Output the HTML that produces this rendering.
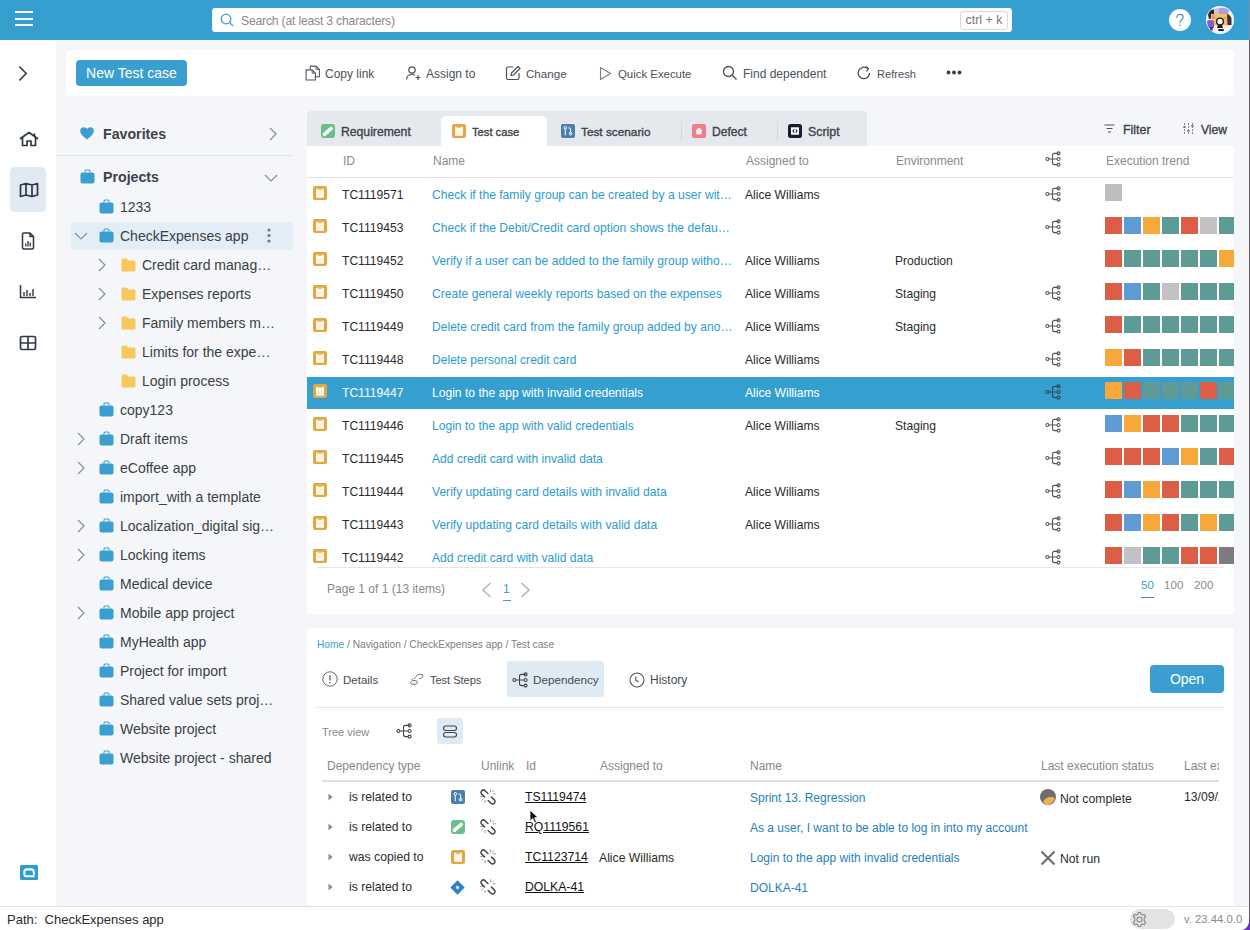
<!DOCTYPE html>
<html><head><meta charset="utf-8">
<style>
*{box-sizing:border-box;margin:0;padding:0}
html,body{width:1250px;height:930px;overflow:hidden}
body{position:relative;background:#f4f6f9;font-family:"Liberation Sans",sans-serif;color:#222;font-size:12px}
.abs{position:absolute}
#hdr{left:0;top:0;width:1250px;height:40px;background:#359fd0}
#rail{left:0;top:40px;width:56px;height:866px;background:#fff}
#tb{left:66px;top:50px;width:1168px;height:46px;background:#fff;border-radius:4px}
#tabs{left:307px;top:111px;width:560px;height:35px;background:#e5e9ed;border-radius:4px 4px 0 0}
#tcard{left:307px;top:146px;width:927px;height:468px;background:#fff;border-radius:0 3px 3px 3px}
#dcard{left:307px;top:628px;width:927px;height:278px;background:#fff;border-radius:3px 3px 0 0}
#status{left:0;top:906px;width:1250px;height:24px;background:#fff;border-top:1px solid #e3e3e3}
#edge{left:1249px;top:0;width:1px;height:930px;background:#6a5a68}
.tbt{top:17px;font-size:12px;color:#4a5058;white-space:nowrap;line-height:14px}
.tabt{top:14px;font-size:12.2px;color:#3d434c;-webkit-text-stroke:0.35px #3d434c;white-space:nowrap;line-height:14px}
.trh{font-size:14.2px;font-weight:bold;color:#3b424b;white-space:nowrap;line-height:16px}
.trt{font-size:14px;color:#3a3f46;white-space:nowrap;line-height:17px;margin-top:1px}
.th{font-size:12px;color:#8a8a8a;white-space:nowrap;line-height:14px;margin-top:1px}
.td{font-size:12.1px;white-space:nowrap;line-height:14px}
.pgs{top:578px;font-size:11.6px;color:#8a8a8a;line-height:14px;white-space:nowrap}
.dtt{top:673px;font-size:12px;color:#444a52;line-height:14px;white-space:nowrap}
.dth{top:759px;font-size:12px;color:#888;line-height:14px;white-space:nowrap}
.dtd{font-size:12.2px;color:#2b2b2b;line-height:14px;white-space:nowrap}
</style></head><body>
<div id="hdr" class="abs">
 <div class="abs" style="left:15px;top:11px;width:18px;height:2px;background:#fff"></div>
 <div class="abs" style="left:15px;top:18px;width:18px;height:2px;background:#fff"></div>
 <div class="abs" style="left:15px;top:24px;width:18px;height:2px;background:#fff"></div>
 <div class="abs" style="left:212px;top:8px;width:800px;height:24px;background:#fff;border-radius:3px">
  <svg class="abs" style="left:8px;top:5px" width="14" height="14" viewBox="0 0 14 14"><circle cx="6" cy="6" r="4.8" fill="none" stroke="#4a9fd0" stroke-width="1.3"/><line x1="9.5" y1="9.5" x2="13" y2="13" stroke="#4a9fd0" stroke-width="1.3"/></svg>
  <div class="abs" style="left:29px;top:6px;font-size:12.2px;color:#8a8a8a;white-space:nowrap;letter-spacing:-0.2px">Search (at least 3 characters)</div>
  <div class="abs" style="left:748px;top:3px;width:48px;height:19px;border:1px solid #dadada;border-radius:3px;font-size:12.5px;color:#777;text-align:center;line-height:17px">ctrl + k</div>
 </div>
 <svg class="abs" style="left:1169px;top:9px" width="22" height="22" viewBox="0 0 22 22"><circle cx="11" cy="11" r="11" fill="#fff"/><path d="M7.9 8.4 Q7.9 5.3 11 5.3 Q14.1 5.3 14.1 8.1 Q14.1 9.9 12.2 10.9 Q11 11.6 11 13.6" fill="none" stroke="#4b8fc2" stroke-width="1.2" stroke-linecap="round"/><circle cx="11" cy="16.3" r="0.8" fill="#4b8fc2"/></svg>
 <svg class="abs" style="left:1206px;top:6px" width="28" height="28" viewBox="0 0 28 28"><defs><clipPath id="avc"><circle cx="14" cy="14" r="13.6"/></clipPath></defs><circle cx="14" cy="14" r="14" fill="#e6f3fa"/><g clip-path="url(#avc)"><rect x="0" y="0" width="28" height="28" fill="#f7f2f7"/><path d="M8 3 Q16 0 22 3 L22 8 L8 8 Z" fill="#cdc3cf"/><path d="M13 2.5 Q19 1 23 4 L22 8 L13 8 Z" fill="#b39be8"/><path d="M2 9 Q3 3 8 3.5 L8 12 L3 13 Z" fill="#2e2a33"/><rect x="5" y="8" width="18" height="11.5" fill="#f3c552"/><path d="M6 9 L9 9 L9 13 L6 13 Z M18 11 L20 11 L20 13 L18 13 Z" fill="#ef8f9a"/><path d="M21 8 Q25 9 25.5 13 L25.5 19 L21.5 19 Z" fill="#3b2f45"/><circle cx="14" cy="15.5" r="3.4" fill="#f4f0ff" stroke="#1f1f24" stroke-width="1.4"/><path d="M12 19 L11 22 L17 22 L16 19 Z" fill="#1f1f24"/><rect x="12" y="23" width="6" height="2" rx="1" fill="#1f1f24"/><path d="M1 15 Q4 13 8 15 L8 22 L2 22 Z" fill="#8a5ccc"/><path d="M4 21 L4 27 L6 27 L7 21 Z" fill="#4a2b7a"/><path d="M0 23 Q14 29 28 21 L28 28 L0 28 Z" fill="#e2f2fb"/></g></svg>
</div>
<div id="rail" class="abs">
 <svg class="abs" style="left:17px;top:25px" width="12" height="17" viewBox="0 0 12 17"><path d="M2.8 2 L9.2 8.5 L2.8 15" fill="none" stroke="#333a44" stroke-width="1.6" stroke-linecap="round"/></svg>
 <svg class="abs" style="left:19px;top:91px" width="20" height="16" viewBox="0 0 20 16"><path d="M1.5 7.5 L10 1.5 L18.5 7.5 M15.5 3 V5.5 M3.5 6.2 V14.5 H8 V10 H12 V14.5 H16.5 V6.2" fill="none" stroke="#2e3744" stroke-width="1.7" stroke-linejoin="round" stroke-linecap="round"/></svg>
 <div class="abs" style="left:10px;top:127px;width:36px;height:45px;background:#dfeaf3;border-radius:5px"></div>
 <svg class="abs" style="left:19px;top:142px" width="20" height="16" viewBox="0 0 20 16"><path d="M1.5 3 L7 1.5 L13 3 L18.5 1.5 V13 L13 14.5 L7 13 L1.5 14.5 Z M7 1.5 V13 M13 3 V14.5" fill="none" stroke="#2e3744" stroke-width="1.7" stroke-linejoin="round"/></svg>
 <svg class="abs" style="left:21px;top:192px" width="14" height="18" viewBox="0 0 14 18"><path d="M1.5 2.5 Q1.5 1 3 1 H9 L12.5 4.5 V15.5 Q12.5 17 11 17 H3 Q1.5 17 1.5 15.5 Z M9 1 V4.5 H12.5" fill="none" stroke="#2e3744" stroke-width="1.5" stroke-linejoin="round"/><path d="M4.8 14.5 V11.5 M7 14.5 V9 M9.2 14.5 V10.5" stroke="#2e3744" stroke-width="1.3"/></svg>
 <svg class="abs" style="left:19px;top:244px" width="18" height="15" viewBox="0 0 18 15"><path d="M1.5 1 V13.5 H17" fill="none" stroke="#2e3744" stroke-width="1.5"/><path d="M5 12 V8 M8 12 V6 M11 12 V9 M14 12 V5" stroke="#2e3744" stroke-width="1.4"/></svg>
 <svg class="abs" style="left:19px;top:295px" width="18" height="16" viewBox="0 0 18 16"><rect x="1.5" y="1.5" width="15" height="13" rx="1.5" fill="none" stroke="#2e3744" stroke-width="1.7"/><path d="M1.5 8 H16.5 M9 1.5 V14.5" stroke="#2e3744" stroke-width="1.7"/></svg>
 <svg class="abs" style="left:20px;top:825px" width="18" height="15" viewBox="0 0 18 15"><rect width="18" height="15" rx="1.5" fill="#2f9bd0"/><path d="M14.6 11.2 H6.3 Q4.4 11.2 4.4 9.2 V6.6 Q4.4 4.4 6.7 4.4 H11.4 Q13.3 4.4 13.6 6.3 L14.1 9.6" fill="none" stroke="#fff" stroke-width="2.1" stroke-linejoin="round"/></svg>
</div>
<div id="tb" class="abs">
 <div class="abs" style="left:10px;top:10px;width:111px;height:26px;background:#3a9fd0;border-radius:4px;color:#fff;font-size:14px;line-height:26px;text-align:center">New Test case</div>
 <svg class="abs" style="left:239px;top:15px" width="16" height="16" viewBox="0 0 16 16"><path d="M5.3 4.3 V1.1 H11.2 L14.4 4.3 V11.8 H10.6" fill="none" stroke="#50565e" stroke-width="1.1" stroke-linejoin="round"/><path d="M11.2 1.1 V4.3 H14.4" fill="none" stroke="#50565e" stroke-width="1"/><path d="M1.1 4.9 H7.2 L10.4 8.1 V15 H1.1 Z" fill="none" stroke="#50565e" stroke-width="1.1" stroke-linejoin="round"/><path d="M7.2 4.9 V8.1 H10.4" fill="none" stroke="#50565e" stroke-width="1"/></svg>
 <div class="abs tbt" style="left:259px">Copy link</div>
 <svg class="abs" style="left:339px;top:15px" width="17" height="16" viewBox="0 0 17 16"><circle cx="7" cy="5" r="3.2" fill="none" stroke="#4a4f57" stroke-width="1.2"/><path d="M1.5 14.5 Q2 9.5 7 9.5 Q9 9.5 10 10.3" fill="none" stroke="#4a4f57" stroke-width="1.2"/><path d="M13 10 V15 M10.5 12.5 H15.5" stroke="#4a4f57" stroke-width="1.2"/></svg>
 <div class="abs tbt" style="left:360px">Assign to</div>
 <svg class="abs" style="left:439px;top:15px" width="16" height="16" viewBox="0 0 16 16"><path d="M8 2 H3 Q1.5 2 1.5 3.5 V13 Q1.5 14.5 3 14.5 H12.5 Q14 14.5 14 13 V8" fill="none" stroke="#4a4f57" stroke-width="1.2"/><path d="M6 10.5 L6.5 8 L13 1.5 L15 3.5 L8.5 10 Z" fill="none" stroke="#4a4f57" stroke-width="1.2" stroke-linejoin="round"/></svg>
 <div class="abs tbt" style="left:460px;font-size:11.6px">Change</div>
 <svg class="abs" style="left:533px;top:16px" width="13" height="15" viewBox="0 0 13 15"><path d="M1.5 1.5 L11.5 7.5 L1.5 13.5 Z" fill="none" stroke="#7a7f86" stroke-width="1.1" stroke-linejoin="round"/></svg>
 <div class="abs tbt" style="left:552px;font-size:11.4px">Quick Execute</div>
 <svg class="abs" style="left:656px;top:15px" width="16" height="16" viewBox="0 0 16 16"><circle cx="6.5" cy="6.5" r="5" fill="none" stroke="#4a4f57" stroke-width="1.3"/><path d="M10.2 10.2 L14.5 14.5" stroke="#4a4f57" stroke-width="1.4"/></svg>
 <div class="abs tbt" style="left:677px">Find dependent</div>
 <svg class="abs" style="left:790px;top:15px" width="16" height="16" viewBox="0 0 16 16"><path d="M13.5 8 A5.7 5.7 0 1 1 11.5 3.6" fill="none" stroke="#4a4f57" stroke-width="1.3"/><path d="M9.5 1.5 L12.5 3.5 L10.5 6.5" fill="none" stroke="#4a4f57" stroke-width="1.3" stroke-linejoin="round"/></svg>
 <div class="abs tbt" style="left:811px;font-size:11.1px">Refresh</div>
 <svg class="abs" style="left:880px;top:20px" width="16" height="5" viewBox="0 0 16 5"><circle cx="2.5" cy="2.5" r="1.9" fill="#3a3f47"/><circle cx="8" cy="2.5" r="1.9" fill="#3a3f47"/><circle cx="13.5" cy="2.5" r="1.9" fill="#3a3f47"/></svg>
</div>
<div id="tree">
<svg class="abs" style="left:80px;top:127px" width="14" height="13" viewBox="0 0 14 13"><path d="M7 12.5 C3 9.5 0.2 7 0.2 3.8 C0.2 1.8 1.8 0.3 3.7 0.3 C5 0.3 6.2 1 7 2 C7.8 1 9 0.3 10.3 0.3 C12.2 0.3 13.8 1.8 13.8 3.8 C13.8 7 11 9.5 7 12.5 Z" fill="#3a9fd0"/></svg>
<div class="abs trh" style="left:103px;top:126px">Favorites</div>
<svg class="abs" style="left:269px;top:127px" width="8" height="14" viewBox="0 0 8 14"><path d="M1 1 L7 7 L1 13" fill="none" stroke="#8a8f96" stroke-width="1.2"/></svg>
<div class="abs" style="left:56px;top:155px;width:236px;height:1px;background:#e1e4e8"></div>
<svg class="abs" style="left:80px;top:169px" width="15" height="15" viewBox="0 0 15 15"><path d="M5 3.5 V2 Q5 1 6 1 H9 Q10 1 10 2 V3.5" fill="none" stroke="#3a9fd0" stroke-width="1.1"/><rect x="0.5" y="3.5" width="14" height="11" rx="2" fill="#3a9fd0"/></svg>
<div class="abs trh" style="left:103px;top:169px">Projects</div>
<svg class="abs" style="left:264px;top:174px" width="14" height="8" viewBox="0 0 14 8"><path d="M1 1 L7 7 L13 1" fill="none" stroke="#8a8f96" stroke-width="1.2"/></svg>
<div class="abs" style="left:71px;top:222px;width:222px;height:28px;background:#e2edf5;border-radius:3px"></div>
<svg class="abs" style="left:267px;top:228px" width="4" height="15" viewBox="0 0 4 15"><circle cx="2" cy="2" r="1.6" fill="#777"/><circle cx="2" cy="7.5" r="1.6" fill="#777"/><circle cx="2" cy="13" r="1.6" fill="#777"/></svg>
<svg class="abs" style="left:99px;top:199px" width="15" height="15" viewBox="0 0 15 15"><path d="M5 3.5 V2 Q5 1 6 1 H9 Q10 1 10 2 V3.5" fill="none" stroke="#3a9fd0" stroke-width="1.1"/><rect x="0.5" y="3.5" width="14" height="11" rx="2" fill="#3a9fd0"/></svg>
<div class="abs trt" style="left:120px;top:198px">1233</div>
<svg class="abs" style="left:74px;top:232px" width="14" height="8" viewBox="0 0 14 8"><path d="M1 1 L7 7 L13 1" fill="none" stroke="#8a8f96" stroke-width="1.2"/></svg>
<svg class="abs" style="left:99px;top:228px" width="15" height="15" viewBox="0 0 15 15"><path d="M5 3.5 V2 Q5 1 6 1 H9 Q10 1 10 2 V3.5" fill="none" stroke="#3a9fd0" stroke-width="1.1"/><rect x="0.5" y="3.5" width="14" height="11" rx="2" fill="#3a9fd0"/></svg>
<div class="abs trt" style="left:120px;top:227px">CheckExpenses app</div>
<svg class="abs" style="left:98px;top:258px" width="8" height="14" viewBox="0 0 8 14"><path d="M1 1 L7 7 L1 13" fill="none" stroke="#8a8f96" stroke-width="1.2"/></svg>
<svg class="abs" style="left:121px;top:258px" width="15" height="14" viewBox="0 0 15 14"><path d="M0.5 2 Q0.5 0.5 2 0.5 H5.5 L7.5 2.5 H13 Q14.5 2.5 14.5 4 V12 Q14.5 13.5 13 13.5 H2 Q0.5 13.5 0.5 12 Z" fill="#f7c85c"/></svg>
<div class="abs trt" style="left:142px;top:256px">Credit card manag…</div>
<svg class="abs" style="left:98px;top:287px" width="8" height="14" viewBox="0 0 8 14"><path d="M1 1 L7 7 L1 13" fill="none" stroke="#8a8f96" stroke-width="1.2"/></svg>
<svg class="abs" style="left:121px;top:287px" width="15" height="14" viewBox="0 0 15 14"><path d="M0.5 2 Q0.5 0.5 2 0.5 H5.5 L7.5 2.5 H13 Q14.5 2.5 14.5 4 V12 Q14.5 13.5 13 13.5 H2 Q0.5 13.5 0.5 12 Z" fill="#f7c85c"/></svg>
<div class="abs trt" style="left:142px;top:285px">Expenses reports</div>
<svg class="abs" style="left:98px;top:316px" width="8" height="14" viewBox="0 0 8 14"><path d="M1 1 L7 7 L1 13" fill="none" stroke="#8a8f96" stroke-width="1.2"/></svg>
<svg class="abs" style="left:121px;top:316px" width="15" height="14" viewBox="0 0 15 14"><path d="M0.5 2 Q0.5 0.5 2 0.5 H5.5 L7.5 2.5 H13 Q14.5 2.5 14.5 4 V12 Q14.5 13.5 13 13.5 H2 Q0.5 13.5 0.5 12 Z" fill="#f7c85c"/></svg>
<div class="abs trt" style="left:142px;top:314px">Family members m…</div>
<svg class="abs" style="left:121px;top:345px" width="15" height="14" viewBox="0 0 15 14"><path d="M0.5 2 Q0.5 0.5 2 0.5 H5.5 L7.5 2.5 H13 Q14.5 2.5 14.5 4 V12 Q14.5 13.5 13 13.5 H2 Q0.5 13.5 0.5 12 Z" fill="#f7c85c"/></svg>
<div class="abs trt" style="left:142px;top:343px">Limits for the expe…</div>
<svg class="abs" style="left:121px;top:374px" width="15" height="14" viewBox="0 0 15 14"><path d="M0.5 2 Q0.5 0.5 2 0.5 H5.5 L7.5 2.5 H13 Q14.5 2.5 14.5 4 V12 Q14.5 13.5 13 13.5 H2 Q0.5 13.5 0.5 12 Z" fill="#f7c85c"/></svg>
<div class="abs trt" style="left:142px;top:372px">Login process</div>
<svg class="abs" style="left:99px;top:402px" width="15" height="15" viewBox="0 0 15 15"><path d="M5 3.5 V2 Q5 1 6 1 H9 Q10 1 10 2 V3.5" fill="none" stroke="#3a9fd0" stroke-width="1.1"/><rect x="0.5" y="3.5" width="14" height="11" rx="2" fill="#3a9fd0"/></svg>
<div class="abs trt" style="left:120px;top:401px">copy123</div>
<svg class="abs" style="left:77px;top:432px" width="8" height="14" viewBox="0 0 8 14"><path d="M1 1 L7 7 L1 13" fill="none" stroke="#8a8f96" stroke-width="1.2"/></svg>
<svg class="abs" style="left:99px;top:431px" width="15" height="15" viewBox="0 0 15 15"><path d="M5 3.5 V2 Q5 1 6 1 H9 Q10 1 10 2 V3.5" fill="none" stroke="#3a9fd0" stroke-width="1.1"/><rect x="0.5" y="3.5" width="14" height="11" rx="2" fill="#3a9fd0"/></svg>
<div class="abs trt" style="left:120px;top:430px">Draft items</div>
<svg class="abs" style="left:77px;top:461px" width="8" height="14" viewBox="0 0 8 14"><path d="M1 1 L7 7 L1 13" fill="none" stroke="#8a8f96" stroke-width="1.2"/></svg>
<svg class="abs" style="left:99px;top:460px" width="15" height="15" viewBox="0 0 15 15"><path d="M5 3.5 V2 Q5 1 6 1 H9 Q10 1 10 2 V3.5" fill="none" stroke="#3a9fd0" stroke-width="1.1"/><rect x="0.5" y="3.5" width="14" height="11" rx="2" fill="#3a9fd0"/></svg>
<div class="abs trt" style="left:120px;top:459px">eCoffee app</div>
<svg class="abs" style="left:99px;top:489px" width="15" height="15" viewBox="0 0 15 15"><path d="M5 3.5 V2 Q5 1 6 1 H9 Q10 1 10 2 V3.5" fill="none" stroke="#3a9fd0" stroke-width="1.1"/><rect x="0.5" y="3.5" width="14" height="11" rx="2" fill="#3a9fd0"/></svg>
<div class="abs trt" style="left:120px;top:488px">import_with a template</div>
<svg class="abs" style="left:77px;top:519px" width="8" height="14" viewBox="0 0 8 14"><path d="M1 1 L7 7 L1 13" fill="none" stroke="#8a8f96" stroke-width="1.2"/></svg>
<svg class="abs" style="left:99px;top:518px" width="15" height="15" viewBox="0 0 15 15"><path d="M5 3.5 V2 Q5 1 6 1 H9 Q10 1 10 2 V3.5" fill="none" stroke="#3a9fd0" stroke-width="1.1"/><rect x="0.5" y="3.5" width="14" height="11" rx="2" fill="#3a9fd0"/></svg>
<div class="abs trt" style="left:120px;top:517px">Localization_digital sig…</div>
<svg class="abs" style="left:77px;top:548px" width="8" height="14" viewBox="0 0 8 14"><path d="M1 1 L7 7 L1 13" fill="none" stroke="#8a8f96" stroke-width="1.2"/></svg>
<svg class="abs" style="left:99px;top:547px" width="15" height="15" viewBox="0 0 15 15"><path d="M5 3.5 V2 Q5 1 6 1 H9 Q10 1 10 2 V3.5" fill="none" stroke="#3a9fd0" stroke-width="1.1"/><rect x="0.5" y="3.5" width="14" height="11" rx="2" fill="#3a9fd0"/></svg>
<div class="abs trt" style="left:120px;top:546px">Locking items</div>
<svg class="abs" style="left:99px;top:576px" width="15" height="15" viewBox="0 0 15 15"><path d="M5 3.5 V2 Q5 1 6 1 H9 Q10 1 10 2 V3.5" fill="none" stroke="#3a9fd0" stroke-width="1.1"/><rect x="0.5" y="3.5" width="14" height="11" rx="2" fill="#3a9fd0"/></svg>
<div class="abs trt" style="left:120px;top:575px">Medical device</div>
<svg class="abs" style="left:77px;top:606px" width="8" height="14" viewBox="0 0 8 14"><path d="M1 1 L7 7 L1 13" fill="none" stroke="#8a8f96" stroke-width="1.2"/></svg>
<svg class="abs" style="left:99px;top:605px" width="15" height="15" viewBox="0 0 15 15"><path d="M5 3.5 V2 Q5 1 6 1 H9 Q10 1 10 2 V3.5" fill="none" stroke="#3a9fd0" stroke-width="1.1"/><rect x="0.5" y="3.5" width="14" height="11" rx="2" fill="#3a9fd0"/></svg>
<div class="abs trt" style="left:120px;top:604px">Mobile app project</div>
<svg class="abs" style="left:99px;top:634px" width="15" height="15" viewBox="0 0 15 15"><path d="M5 3.5 V2 Q5 1 6 1 H9 Q10 1 10 2 V3.5" fill="none" stroke="#3a9fd0" stroke-width="1.1"/><rect x="0.5" y="3.5" width="14" height="11" rx="2" fill="#3a9fd0"/></svg>
<div class="abs trt" style="left:120px;top:633px">MyHealth app</div>
<svg class="abs" style="left:99px;top:663px" width="15" height="15" viewBox="0 0 15 15"><path d="M5 3.5 V2 Q5 1 6 1 H9 Q10 1 10 2 V3.5" fill="none" stroke="#3a9fd0" stroke-width="1.1"/><rect x="0.5" y="3.5" width="14" height="11" rx="2" fill="#3a9fd0"/></svg>
<div class="abs trt" style="left:120px;top:662px">Project for import</div>
<svg class="abs" style="left:99px;top:692px" width="15" height="15" viewBox="0 0 15 15"><path d="M5 3.5 V2 Q5 1 6 1 H9 Q10 1 10 2 V3.5" fill="none" stroke="#3a9fd0" stroke-width="1.1"/><rect x="0.5" y="3.5" width="14" height="11" rx="2" fill="#3a9fd0"/></svg>
<div class="abs trt" style="left:120px;top:691px">Shared value sets proj…</div>
<svg class="abs" style="left:99px;top:721px" width="15" height="15" viewBox="0 0 15 15"><path d="M5 3.5 V2 Q5 1 6 1 H9 Q10 1 10 2 V3.5" fill="none" stroke="#3a9fd0" stroke-width="1.1"/><rect x="0.5" y="3.5" width="14" height="11" rx="2" fill="#3a9fd0"/></svg>
<div class="abs trt" style="left:120px;top:720px">Website project</div>
<svg class="abs" style="left:99px;top:750px" width="15" height="15" viewBox="0 0 15 15"><path d="M5 3.5 V2 Q5 1 6 1 H9 Q10 1 10 2 V3.5" fill="none" stroke="#3a9fd0" stroke-width="1.1"/><rect x="0.5" y="3.5" width="14" height="11" rx="2" fill="#3a9fd0"/></svg>
<div class="abs trt" style="left:120px;top:749px">Website project - shared</div>
</div>
<div id="tabs" class="abs">
 <div class="abs" style="left:134px;top:5px;width:106px;height:31px;background:#fff;border-radius:5px 5px 0 0"></div>
 <div class="abs" style="left:374px;top:10px;width:1px;height:20px;background:#d5dade"></div>
 <div class="abs" style="left:470px;top:10px;width:1px;height:20px;background:#d5dade"></div>
 <svg class="abs" style="left:14px;top:13px" width="14" height="14" viewBox="0 0 14 14"><rect width="14" height="14" rx="3" fill="#6bbd8c"/><path d="M3.4 10.4 L10.2 4.4" stroke="#fbfffc" stroke-width="3.6" stroke-linecap="round"/><path d="M7.4 5.8 L8.9 7.3" stroke="#9bd3b0" stroke-width="0.6"/></svg>
 <div class="abs tabt" style="left:34px">Requirement</div>
 <svg class="abs" style="left:145px;top:13px" width="14" height="14" viewBox="0 0 14 14"><rect width="14" height="14" rx="2" fill="#e0a743"/><rect x="3" y="2.8" width="8" height="9" fill="#fdf7e6"/><path d="M5 3.5 H9" stroke="#f0c070" stroke-width="1"/></svg>
 <div class="abs tabt" style="left:165px;font-size:11.2px">Test case</div>
 <svg class="abs" style="left:254px;top:13px" width="14" height="14" viewBox="0 0 14 14"><rect width="14" height="14" rx="2" fill="#4a7fae"/><circle cx="4.3" cy="3.8" r="1.3" fill="none" stroke="#fff" stroke-width="1"/><path d="M4.3 5.1 V11.3 M7.3 4 H8.6 Q9.6 4 9.6 5 V8.3" fill="none" stroke="#fff" stroke-width="1"/><circle cx="9.6" cy="9.6" r="1.4" fill="none" stroke="#fff" stroke-width="1"/><circle cx="9.6" cy="9.6" r="0.5" fill="#fff"/></svg>
 <div class="abs tabt" style="left:274px;font-size:11.8px">Test scenario</div>
 <svg class="abs" style="left:385px;top:13px" width="14" height="14" viewBox="0 0 14 14"><rect width="14" height="14" rx="2" fill="#ec7f8a"/><ellipse cx="7" cy="7.8" rx="2.6" ry="3" fill="#fff"/><path d="M4 6 L5 6.8 M10 6 L9 6.8 M4 9.8 L5 9.3 M10 9.8 L9 9.3 M5.8 4 L6.4 5 M8.2 4 L7.6 5" stroke="#fff" stroke-width="0.9"/><path d="M7 5.5 V10.5" stroke="#ec7f8a" stroke-width="0.5"/></svg>
 <div class="abs tabt" style="left:405px;font-size:12.1px">Defect</div>
 <svg class="abs" style="left:481px;top:13px" width="14" height="14" viewBox="0 0 14 14"><rect width="14" height="14" rx="2.5" fill="#17202c"/><rect x="3" y="3.3" width="8" height="7.4" fill="#fff"/><path d="M6.2 5.3 L4.9 7 L6.2 8.7 M7.8 5.3 L9.1 7 L7.8 8.7" fill="none" stroke="#17202c" stroke-width="1.1"/></svg>
 <div class="abs tabt" style="left:501px;font-size:12.4px">Script</div>
</div>
<svg class="abs" style="left:1104px;top:124px" width="11" height="9" viewBox="0 0 11 9"><path d="M0.5 1 H10.5 M2.5 4.5 H8.5 M4 8 H7" stroke="#555" stroke-width="1.1"/></svg>
<div class="abs tabt" style="left:1123px;top:123px;font-size:12.4px">Filter</div>
<svg class="abs" style="left:1183px;top:123px" width="11" height="12" viewBox="0 0 11 12"><path d="M1.5 0 V12 M5.5 0 V12 M9.5 0 V12" stroke="#888" stroke-width="1" stroke-dasharray="2 1"/><path d="M0 4 H3 M4 8 H7 M8 3 H11" stroke="#555" stroke-width="1.2"/></svg>
<div class="abs tabt" style="left:1201px;top:123px;font-size:12.1px">View</div>
<div id="tcard" class="abs"></div>
<div id="table">
<div class="abs th" style="left:343px;top:153px">ID</div>
<div class="abs th" style="left:433px;top:153px">Name</div>
<div class="abs th" style="left:746px;top:153px">Assigned to</div>
<div class="abs th" style="left:896px;top:153px">Environment</div>
<svg class="abs" style="left:1045px;top:151px" width="16" height="16" viewBox="0 0 16 16"><circle cx="2.4" cy="8" r="1.5" fill="none" stroke="#555" stroke-width="1.1"/><path d="M3.9 8 H12.1 M13.7 2.4 H9.5 Q7.5 2.4 7.5 4.4 V11.6 Q7.5 13.6 9.5 13.6 H12.1" fill="none" stroke="#555" stroke-width="1.1"/><circle cx="13.6" cy="2.4" r="1.5" fill="none" stroke="#555" stroke-width="1.1"/><circle cx="13.6" cy="8" r="1.5" fill="none" stroke="#555" stroke-width="1.1"/><circle cx="13.6" cy="13.6" r="1.5" fill="none" stroke="#555" stroke-width="1.1"/></svg>
<div class="abs th" style="left:1106px;top:153px">Execution trend</div>
<div class="abs" style="left:307px;top:177px;width:927px;height:1px;background:#e2e2e2"></div>
<svg class="abs" style="left:313px;top:186px" width="14" height="14" viewBox="0 0 14 14"><rect width="14" height="14" rx="2" fill="#e0a743"/><rect x="3" y="2.8" width="8" height="9" fill="#fdf7e6"/><path d="M5 3.5 H9" stroke="#f0c070" stroke-width="1"/><path d="M5.8 7.8 L6.8 8.6 L8.4 6.6" fill="none" stroke="#f0d09a" stroke-width="0.7"/></svg>
<div class="abs td" style="left:342px;top:187.5px;color:#2b2b2b">TC1119571</div>
<div class="abs td" style="left:432px;top:187.5px;color:#2d9bd0">Check if the family group can be created by a user wit…</div>
<div class="abs td" style="left:745px;top:187.5px;color:#2b2b2b">Alice Williams</div>
<svg class="abs" style="left:1045px;top:186px" width="16" height="16" viewBox="0 0 16 16"><circle cx="2.4" cy="8" r="1.5" fill="none" stroke="#555" stroke-width="1.1"/><path d="M3.9 8 H12.1 M13.7 2.4 H9.5 Q7.5 2.4 7.5 4.4 V11.6 Q7.5 13.6 9.5 13.6 H12.1" fill="none" stroke="#555" stroke-width="1.1"/><circle cx="13.6" cy="2.4" r="1.5" fill="none" stroke="#555" stroke-width="1.1"/><circle cx="13.6" cy="8" r="1.5" fill="none" stroke="#555" stroke-width="1.1"/><circle cx="13.6" cy="13.6" r="1.5" fill="none" stroke="#555" stroke-width="1.1"/></svg>
<div class="abs" style="left:1105px;top:184px;width:17px;height:17px;background:#bdbdbd"></div>
<svg class="abs" style="left:313px;top:219px" width="14" height="14" viewBox="0 0 14 14"><rect width="14" height="14" rx="2" fill="#e0a743"/><rect x="3" y="2.8" width="8" height="9" fill="#fdf7e6"/><path d="M5 3.5 H9" stroke="#f0c070" stroke-width="1"/><path d="M5.8 7.8 L6.8 8.6 L8.4 6.6" fill="none" stroke="#f0d09a" stroke-width="0.7"/></svg>
<div class="abs td" style="left:342px;top:220.5px;color:#2b2b2b">TC1119453</div>
<div class="abs td" style="left:432px;top:220.5px;color:#2d9bd0">Check if the Debit/Credit card option shows the defau…</div>
<svg class="abs" style="left:1045px;top:219px" width="16" height="16" viewBox="0 0 16 16"><circle cx="2.4" cy="8" r="1.5" fill="none" stroke="#555" stroke-width="1.1"/><path d="M3.9 8 H12.1 M13.7 2.4 H9.5 Q7.5 2.4 7.5 4.4 V11.6 Q7.5 13.6 9.5 13.6 H12.1" fill="none" stroke="#555" stroke-width="1.1"/><circle cx="13.6" cy="2.4" r="1.5" fill="none" stroke="#555" stroke-width="1.1"/><circle cx="13.6" cy="8" r="1.5" fill="none" stroke="#555" stroke-width="1.1"/><circle cx="13.6" cy="13.6" r="1.5" fill="none" stroke="#555" stroke-width="1.1"/></svg>
<div class="abs" style="left:1105px;top:217px;width:17px;height:17px;background:#dc5e47"></div>
<div class="abs" style="left:1124px;top:217px;width:17px;height:17px;background:#5e9bd2"></div>
<div class="abs" style="left:1143px;top:217px;width:17px;height:17px;background:#f6a93a"></div>
<div class="abs" style="left:1162px;top:217px;width:17px;height:17px;background:#5e9b96"></div>
<div class="abs" style="left:1181px;top:217px;width:17px;height:17px;background:#dc5e47"></div>
<div class="abs" style="left:1200px;top:217px;width:17px;height:17px;background:#c2c2c4"></div>
<div class="abs" style="left:1219px;top:217px;width:15px;height:17px;background:#5e9b96"></div>
<svg class="abs" style="left:313px;top:252px" width="14" height="14" viewBox="0 0 14 14"><rect width="14" height="14" rx="2" fill="#e0a743"/><rect x="3" y="2.8" width="8" height="9" fill="#fdf7e6"/><path d="M5 3.5 H9" stroke="#f0c070" stroke-width="1"/><path d="M5.8 7.8 L6.8 8.6 L8.4 6.6" fill="none" stroke="#f0d09a" stroke-width="0.7"/></svg>
<div class="abs td" style="left:342px;top:253.5px;color:#2b2b2b">TC1119452</div>
<div class="abs td" style="left:432px;top:253.5px;color:#2d9bd0">Verify if a user can be added to the family group witho…</div>
<div class="abs td" style="left:745px;top:253.5px;color:#2b2b2b">Alice Williams</div>
<div class="abs td" style="left:895px;top:253.5px;color:#2b2b2b">Production</div>
<div class="abs" style="left:1105px;top:250px;width:17px;height:17px;background:#dc5e47"></div>
<div class="abs" style="left:1124px;top:250px;width:17px;height:17px;background:#5e9b96"></div>
<div class="abs" style="left:1143px;top:250px;width:17px;height:17px;background:#5e9b96"></div>
<div class="abs" style="left:1162px;top:250px;width:17px;height:17px;background:#5e9b96"></div>
<div class="abs" style="left:1181px;top:250px;width:17px;height:17px;background:#5e9b96"></div>
<div class="abs" style="left:1200px;top:250px;width:17px;height:17px;background:#5e9b96"></div>
<div class="abs" style="left:1219px;top:250px;width:15px;height:17px;background:#f6a93a"></div>
<svg class="abs" style="left:313px;top:285px" width="14" height="14" viewBox="0 0 14 14"><rect width="14" height="14" rx="2" fill="#e0a743"/><rect x="3" y="2.8" width="8" height="9" fill="#fdf7e6"/><path d="M5 3.5 H9" stroke="#f0c070" stroke-width="1"/><path d="M5.8 7.8 L6.8 8.6 L8.4 6.6" fill="none" stroke="#f0d09a" stroke-width="0.7"/></svg>
<div class="abs td" style="left:342px;top:286.5px;color:#2b2b2b">TC1119450</div>
<div class="abs td" style="left:432px;top:286.5px;color:#2d9bd0">Create general weekly reports based on the expenses</div>
<div class="abs td" style="left:745px;top:286.5px;color:#2b2b2b">Alice Williams</div>
<div class="abs td" style="left:895px;top:286.5px;color:#2b2b2b">Staging</div>
<svg class="abs" style="left:1045px;top:285px" width="16" height="16" viewBox="0 0 16 16"><circle cx="2.4" cy="8" r="1.5" fill="none" stroke="#555" stroke-width="1.1"/><path d="M3.9 8 H12.1 M13.7 2.4 H9.5 Q7.5 2.4 7.5 4.4 V11.6 Q7.5 13.6 9.5 13.6 H12.1" fill="none" stroke="#555" stroke-width="1.1"/><circle cx="13.6" cy="2.4" r="1.5" fill="none" stroke="#555" stroke-width="1.1"/><circle cx="13.6" cy="8" r="1.5" fill="none" stroke="#555" stroke-width="1.1"/><circle cx="13.6" cy="13.6" r="1.5" fill="none" stroke="#555" stroke-width="1.1"/></svg>
<div class="abs" style="left:1105px;top:283px;width:17px;height:17px;background:#dc5e47"></div>
<div class="abs" style="left:1124px;top:283px;width:17px;height:17px;background:#5e9bd2"></div>
<div class="abs" style="left:1143px;top:283px;width:17px;height:17px;background:#5e9b96"></div>
<div class="abs" style="left:1162px;top:283px;width:17px;height:17px;background:#c2c2c4"></div>
<div class="abs" style="left:1181px;top:283px;width:17px;height:17px;background:#5e9b96"></div>
<div class="abs" style="left:1200px;top:283px;width:17px;height:17px;background:#5e9b96"></div>
<div class="abs" style="left:1219px;top:283px;width:15px;height:17px;background:#5e9b96"></div>
<svg class="abs" style="left:313px;top:318px" width="14" height="14" viewBox="0 0 14 14"><rect width="14" height="14" rx="2" fill="#e0a743"/><rect x="3" y="2.8" width="8" height="9" fill="#fdf7e6"/><path d="M5 3.5 H9" stroke="#f0c070" stroke-width="1"/><path d="M5.8 7.8 L6.8 8.6 L8.4 6.6" fill="none" stroke="#f0d09a" stroke-width="0.7"/></svg>
<div class="abs td" style="left:342px;top:319.5px;color:#2b2b2b">TC1119449</div>
<div class="abs td" style="left:432px;top:319.5px;color:#2d9bd0">Delete credit card from the family group added by ano…</div>
<div class="abs td" style="left:745px;top:319.5px;color:#2b2b2b">Alice Williams</div>
<div class="abs td" style="left:895px;top:319.5px;color:#2b2b2b">Staging</div>
<svg class="abs" style="left:1045px;top:318px" width="16" height="16" viewBox="0 0 16 16"><circle cx="2.4" cy="8" r="1.5" fill="none" stroke="#555" stroke-width="1.1"/><path d="M3.9 8 H12.1 M13.7 2.4 H9.5 Q7.5 2.4 7.5 4.4 V11.6 Q7.5 13.6 9.5 13.6 H12.1" fill="none" stroke="#555" stroke-width="1.1"/><circle cx="13.6" cy="2.4" r="1.5" fill="none" stroke="#555" stroke-width="1.1"/><circle cx="13.6" cy="8" r="1.5" fill="none" stroke="#555" stroke-width="1.1"/><circle cx="13.6" cy="13.6" r="1.5" fill="none" stroke="#555" stroke-width="1.1"/></svg>
<div class="abs" style="left:1105px;top:316px;width:17px;height:17px;background:#dc5e47"></div>
<div class="abs" style="left:1124px;top:316px;width:17px;height:17px;background:#5e9b96"></div>
<div class="abs" style="left:1143px;top:316px;width:17px;height:17px;background:#5e9b96"></div>
<div class="abs" style="left:1162px;top:316px;width:17px;height:17px;background:#5e9b96"></div>
<div class="abs" style="left:1181px;top:316px;width:17px;height:17px;background:#5e9b96"></div>
<div class="abs" style="left:1200px;top:316px;width:17px;height:17px;background:#5e9b96"></div>
<div class="abs" style="left:1219px;top:316px;width:15px;height:17px;background:#5e9b96"></div>
<svg class="abs" style="left:313px;top:351px" width="14" height="14" viewBox="0 0 14 14"><rect width="14" height="14" rx="2" fill="#e0a743"/><rect x="3" y="2.8" width="8" height="9" fill="#fdf7e6"/><path d="M5 3.5 H9" stroke="#f0c070" stroke-width="1"/><path d="M5.8 7.8 L6.8 8.6 L8.4 6.6" fill="none" stroke="#f0d09a" stroke-width="0.7"/></svg>
<div class="abs td" style="left:342px;top:352.5px;color:#2b2b2b">TC1119448</div>
<div class="abs td" style="left:432px;top:352.5px;color:#2d9bd0">Delete personal credit card</div>
<div class="abs td" style="left:745px;top:352.5px;color:#2b2b2b">Alice Williams</div>
<svg class="abs" style="left:1045px;top:351px" width="16" height="16" viewBox="0 0 16 16"><circle cx="2.4" cy="8" r="1.5" fill="none" stroke="#555" stroke-width="1.1"/><path d="M3.9 8 H12.1 M13.7 2.4 H9.5 Q7.5 2.4 7.5 4.4 V11.6 Q7.5 13.6 9.5 13.6 H12.1" fill="none" stroke="#555" stroke-width="1.1"/><circle cx="13.6" cy="2.4" r="1.5" fill="none" stroke="#555" stroke-width="1.1"/><circle cx="13.6" cy="8" r="1.5" fill="none" stroke="#555" stroke-width="1.1"/><circle cx="13.6" cy="13.6" r="1.5" fill="none" stroke="#555" stroke-width="1.1"/></svg>
<div class="abs" style="left:1105px;top:349px;width:17px;height:17px;background:#f6a93a"></div>
<div class="abs" style="left:1124px;top:349px;width:17px;height:17px;background:#dc5e47"></div>
<div class="abs" style="left:1143px;top:349px;width:17px;height:17px;background:#5e9b96"></div>
<div class="abs" style="left:1162px;top:349px;width:17px;height:17px;background:#5e9b96"></div>
<div class="abs" style="left:1181px;top:349px;width:17px;height:17px;background:#5e9b96"></div>
<div class="abs" style="left:1200px;top:349px;width:17px;height:17px;background:#5e9b96"></div>
<div class="abs" style="left:1219px;top:349px;width:15px;height:17px;background:#5e9b96"></div>
<div class="abs" style="left:307px;top:377px;width:927px;height:32px;background:#359fd0"></div>
<svg class="abs" style="left:313px;top:384px" width="14" height="14" viewBox="0 0 14 14"><rect width="14" height="14" rx="2" fill="#e0a743"/><rect x="3" y="2.8" width="8" height="9" fill="#fdf7e6"/><path d="M5 3.5 H9" stroke="#f0c070" stroke-width="1"/><path d="M5.8 7.8 L6.8 8.6 L8.4 6.6" fill="none" stroke="#f0d09a" stroke-width="0.7"/></svg>
<div class="abs td" style="left:342px;top:385.5px;color:#fff">TC1119447</div>
<div class="abs td" style="left:432px;top:385.5px;color:#fff">Login to the app with invalid credentials</div>
<div class="abs td" style="left:745px;top:385.5px;color:#fff">Alice Williams</div>
<svg class="abs" style="left:1045px;top:384px" width="16" height="16" viewBox="0 0 16 16"><circle cx="2.4" cy="8" r="1.5" fill="none" stroke="#2f4a5a" stroke-width="1.1"/><path d="M3.9 8 H12.1 M13.7 2.4 H9.5 Q7.5 2.4 7.5 4.4 V11.6 Q7.5 13.6 9.5 13.6 H12.1" fill="none" stroke="#2f4a5a" stroke-width="1.1"/><circle cx="13.6" cy="2.4" r="1.5" fill="none" stroke="#2f4a5a" stroke-width="1.1"/><circle cx="13.6" cy="8" r="1.5" fill="none" stroke="#2f4a5a" stroke-width="1.1"/><circle cx="13.6" cy="13.6" r="1.5" fill="none" stroke="#2f4a5a" stroke-width="1.1"/></svg>
<div class="abs" style="left:1105px;top:382px;width:17px;height:17px;background:#f6a93a"></div>
<div class="abs" style="left:1124px;top:382px;width:17px;height:17px;background:#dc5e47"></div>
<div class="abs" style="left:1143px;top:382px;width:17px;height:17px;background:#5e9b96"></div>
<div class="abs" style="left:1162px;top:382px;width:17px;height:17px;background:#5e9b96"></div>
<div class="abs" style="left:1181px;top:382px;width:17px;height:17px;background:#5e9b96"></div>
<div class="abs" style="left:1200px;top:382px;width:17px;height:17px;background:#dc5e47"></div>
<div class="abs" style="left:1219px;top:382px;width:15px;height:17px;background:#5e9b96"></div>
<svg class="abs" style="left:313px;top:417px" width="14" height="14" viewBox="0 0 14 14"><rect width="14" height="14" rx="2" fill="#e0a743"/><rect x="3" y="2.8" width="8" height="9" fill="#fdf7e6"/><path d="M5 3.5 H9" stroke="#f0c070" stroke-width="1"/><path d="M5.8 7.8 L6.8 8.6 L8.4 6.6" fill="none" stroke="#f0d09a" stroke-width="0.7"/></svg>
<div class="abs td" style="left:342px;top:418.5px;color:#2b2b2b">TC1119446</div>
<div class="abs td" style="left:432px;top:418.5px;color:#2d9bd0">Login to the app with valid credentials</div>
<div class="abs td" style="left:745px;top:418.5px;color:#2b2b2b">Alice Williams</div>
<div class="abs td" style="left:895px;top:418.5px;color:#2b2b2b">Staging</div>
<svg class="abs" style="left:1045px;top:417px" width="16" height="16" viewBox="0 0 16 16"><circle cx="2.4" cy="8" r="1.5" fill="none" stroke="#555" stroke-width="1.1"/><path d="M3.9 8 H12.1 M13.7 2.4 H9.5 Q7.5 2.4 7.5 4.4 V11.6 Q7.5 13.6 9.5 13.6 H12.1" fill="none" stroke="#555" stroke-width="1.1"/><circle cx="13.6" cy="2.4" r="1.5" fill="none" stroke="#555" stroke-width="1.1"/><circle cx="13.6" cy="8" r="1.5" fill="none" stroke="#555" stroke-width="1.1"/><circle cx="13.6" cy="13.6" r="1.5" fill="none" stroke="#555" stroke-width="1.1"/></svg>
<div class="abs" style="left:1105px;top:415px;width:17px;height:17px;background:#5e9bd2"></div>
<div class="abs" style="left:1124px;top:415px;width:17px;height:17px;background:#f6a93a"></div>
<div class="abs" style="left:1143px;top:415px;width:17px;height:17px;background:#dc5e47"></div>
<div class="abs" style="left:1162px;top:415px;width:17px;height:17px;background:#dc5e47"></div>
<div class="abs" style="left:1181px;top:415px;width:17px;height:17px;background:#5e9b96"></div>
<div class="abs" style="left:1200px;top:415px;width:17px;height:17px;background:#5e9b96"></div>
<div class="abs" style="left:1219px;top:415px;width:15px;height:17px;background:#5e9b96"></div>
<svg class="abs" style="left:313px;top:450px" width="14" height="14" viewBox="0 0 14 14"><rect width="14" height="14" rx="2" fill="#e0a743"/><rect x="3" y="2.8" width="8" height="9" fill="#fdf7e6"/><path d="M5 3.5 H9" stroke="#f0c070" stroke-width="1"/><path d="M5.8 7.8 L6.8 8.6 L8.4 6.6" fill="none" stroke="#f0d09a" stroke-width="0.7"/></svg>
<div class="abs td" style="left:342px;top:451.5px;color:#2b2b2b">TC1119445</div>
<div class="abs td" style="left:432px;top:451.5px;color:#2d9bd0">Add credit card with invalid data</div>
<svg class="abs" style="left:1045px;top:450px" width="16" height="16" viewBox="0 0 16 16"><circle cx="2.4" cy="8" r="1.5" fill="none" stroke="#555" stroke-width="1.1"/><path d="M3.9 8 H12.1 M13.7 2.4 H9.5 Q7.5 2.4 7.5 4.4 V11.6 Q7.5 13.6 9.5 13.6 H12.1" fill="none" stroke="#555" stroke-width="1.1"/><circle cx="13.6" cy="2.4" r="1.5" fill="none" stroke="#555" stroke-width="1.1"/><circle cx="13.6" cy="8" r="1.5" fill="none" stroke="#555" stroke-width="1.1"/><circle cx="13.6" cy="13.6" r="1.5" fill="none" stroke="#555" stroke-width="1.1"/></svg>
<div class="abs" style="left:1105px;top:448px;width:17px;height:17px;background:#dc5e47"></div>
<div class="abs" style="left:1124px;top:448px;width:17px;height:17px;background:#dc5e47"></div>
<div class="abs" style="left:1143px;top:448px;width:17px;height:17px;background:#dc5e47"></div>
<div class="abs" style="left:1162px;top:448px;width:17px;height:17px;background:#5e9bd2"></div>
<div class="abs" style="left:1181px;top:448px;width:17px;height:17px;background:#f6a93a"></div>
<div class="abs" style="left:1200px;top:448px;width:17px;height:17px;background:#5e9b96"></div>
<div class="abs" style="left:1219px;top:448px;width:15px;height:17px;background:#dc5e47"></div>
<svg class="abs" style="left:313px;top:483px" width="14" height="14" viewBox="0 0 14 14"><rect width="14" height="14" rx="2" fill="#e0a743"/><rect x="3" y="2.8" width="8" height="9" fill="#fdf7e6"/><path d="M5 3.5 H9" stroke="#f0c070" stroke-width="1"/><path d="M5.8 7.8 L6.8 8.6 L8.4 6.6" fill="none" stroke="#f0d09a" stroke-width="0.7"/></svg>
<div class="abs td" style="left:342px;top:484.5px;color:#2b2b2b">TC1119444</div>
<div class="abs td" style="left:432px;top:484.5px;color:#2d9bd0">Verify updating card details with invalid data</div>
<div class="abs td" style="left:745px;top:484.5px;color:#2b2b2b">Alice Williams</div>
<svg class="abs" style="left:1045px;top:483px" width="16" height="16" viewBox="0 0 16 16"><circle cx="2.4" cy="8" r="1.5" fill="none" stroke="#555" stroke-width="1.1"/><path d="M3.9 8 H12.1 M13.7 2.4 H9.5 Q7.5 2.4 7.5 4.4 V11.6 Q7.5 13.6 9.5 13.6 H12.1" fill="none" stroke="#555" stroke-width="1.1"/><circle cx="13.6" cy="2.4" r="1.5" fill="none" stroke="#555" stroke-width="1.1"/><circle cx="13.6" cy="8" r="1.5" fill="none" stroke="#555" stroke-width="1.1"/><circle cx="13.6" cy="13.6" r="1.5" fill="none" stroke="#555" stroke-width="1.1"/></svg>
<div class="abs" style="left:1105px;top:481px;width:17px;height:17px;background:#dc5e47"></div>
<div class="abs" style="left:1124px;top:481px;width:17px;height:17px;background:#5e9bd2"></div>
<div class="abs" style="left:1143px;top:481px;width:17px;height:17px;background:#f6a93a"></div>
<div class="abs" style="left:1162px;top:481px;width:17px;height:17px;background:#dc5e47"></div>
<div class="abs" style="left:1181px;top:481px;width:17px;height:17px;background:#5e9b96"></div>
<div class="abs" style="left:1200px;top:481px;width:17px;height:17px;background:#5e9b96"></div>
<div class="abs" style="left:1219px;top:481px;width:15px;height:17px;background:#5e9b96"></div>
<svg class="abs" style="left:313px;top:516px" width="14" height="14" viewBox="0 0 14 14"><rect width="14" height="14" rx="2" fill="#e0a743"/><rect x="3" y="2.8" width="8" height="9" fill="#fdf7e6"/><path d="M5 3.5 H9" stroke="#f0c070" stroke-width="1"/><path d="M5.8 7.8 L6.8 8.6 L8.4 6.6" fill="none" stroke="#f0d09a" stroke-width="0.7"/></svg>
<div class="abs td" style="left:342px;top:517.5px;color:#2b2b2b">TC1119443</div>
<div class="abs td" style="left:432px;top:517.5px;color:#2d9bd0">Verify updating card details with valid data</div>
<div class="abs td" style="left:745px;top:517.5px;color:#2b2b2b">Alice Williams</div>
<svg class="abs" style="left:1045px;top:516px" width="16" height="16" viewBox="0 0 16 16"><circle cx="2.4" cy="8" r="1.5" fill="none" stroke="#555" stroke-width="1.1"/><path d="M3.9 8 H12.1 M13.7 2.4 H9.5 Q7.5 2.4 7.5 4.4 V11.6 Q7.5 13.6 9.5 13.6 H12.1" fill="none" stroke="#555" stroke-width="1.1"/><circle cx="13.6" cy="2.4" r="1.5" fill="none" stroke="#555" stroke-width="1.1"/><circle cx="13.6" cy="8" r="1.5" fill="none" stroke="#555" stroke-width="1.1"/><circle cx="13.6" cy="13.6" r="1.5" fill="none" stroke="#555" stroke-width="1.1"/></svg>
<div class="abs" style="left:1105px;top:514px;width:17px;height:17px;background:#dc5e47"></div>
<div class="abs" style="left:1124px;top:514px;width:17px;height:17px;background:#5e9bd2"></div>
<div class="abs" style="left:1143px;top:514px;width:17px;height:17px;background:#f6a93a"></div>
<div class="abs" style="left:1162px;top:514px;width:17px;height:17px;background:#dc5e47"></div>
<div class="abs" style="left:1181px;top:514px;width:17px;height:17px;background:#5e9b96"></div>
<div class="abs" style="left:1200px;top:514px;width:17px;height:17px;background:#f6a93a"></div>
<div class="abs" style="left:1219px;top:514px;width:15px;height:17px;background:#5e9b96"></div>
<svg class="abs" style="left:313px;top:549px" width="14" height="14" viewBox="0 0 14 14"><rect width="14" height="14" rx="2" fill="#e0a743"/><rect x="3" y="2.8" width="8" height="9" fill="#fdf7e6"/><path d="M5 3.5 H9" stroke="#f0c070" stroke-width="1"/><path d="M5.8 7.8 L6.8 8.6 L8.4 6.6" fill="none" stroke="#f0d09a" stroke-width="0.7"/></svg>
<div class="abs td" style="left:342px;top:550.5px;color:#2b2b2b">TC1119442</div>
<div class="abs td" style="left:432px;top:550.5px;color:#2d9bd0">Add credit card with valid data</div>
<svg class="abs" style="left:1045px;top:549px" width="16" height="16" viewBox="0 0 16 16"><circle cx="2.4" cy="8" r="1.5" fill="none" stroke="#555" stroke-width="1.1"/><path d="M3.9 8 H12.1 M13.7 2.4 H9.5 Q7.5 2.4 7.5 4.4 V11.6 Q7.5 13.6 9.5 13.6 H12.1" fill="none" stroke="#555" stroke-width="1.1"/><circle cx="13.6" cy="2.4" r="1.5" fill="none" stroke="#555" stroke-width="1.1"/><circle cx="13.6" cy="8" r="1.5" fill="none" stroke="#555" stroke-width="1.1"/><circle cx="13.6" cy="13.6" r="1.5" fill="none" stroke="#555" stroke-width="1.1"/></svg>
<div class="abs" style="left:1105px;top:547px;width:17px;height:17px;background:#dc5e47"></div>
<div class="abs" style="left:1124px;top:547px;width:17px;height:17px;background:#c2c2c4"></div>
<div class="abs" style="left:1143px;top:547px;width:17px;height:17px;background:#5e9b96"></div>
<div class="abs" style="left:1162px;top:547px;width:17px;height:17px;background:#5e9b96"></div>
<div class="abs" style="left:1181px;top:547px;width:17px;height:17px;background:#dc5e47"></div>
<div class="abs" style="left:1200px;top:547px;width:17px;height:17px;background:#dc5e47"></div>
<div class="abs" style="left:1219px;top:547px;width:15px;height:17px;background:#7b7b80"></div>
</div>
<div id="pager">
 <div class="abs" style="left:317px;top:567px;width:907px;height:1px;background:#e4e6e9"></div>
 <div class="abs" style="left:327px;top:582px;font-size:12px;color:#888;white-space:nowrap;line-height:14px">Page 1 of 1 (13 items)</div>
 <svg class="abs" style="left:481px;top:582px" width="11" height="16" viewBox="0 0 11 16"><path d="M9.5 1 L2 8 L9.5 15" fill="none" stroke="#b5b5b5" stroke-width="1.6"/></svg>
 <div class="abs" style="left:503px;top:582px;font-size:12px;color:#3a9fd0;line-height:14px">1</div>
 <div class="abs" style="left:503px;top:600px;width:8px;height:1px;background:#3a9fd0"></div>
 <svg class="abs" style="left:520px;top:582px" width="11" height="16" viewBox="0 0 11 16"><path d="M1.5 1 L9 8 L1.5 15" fill="none" stroke="#b5b5b5" stroke-width="1.6"/></svg>
 <div class="abs pgs" style="left:1141px;color:#3aa0d0">50</div>
 <div class="abs" style="left:1141px;top:597px;width:13px;height:1px;background:#3a8fb0"></div>
 <div class="abs pgs" style="left:1164px">100</div>
 <div class="abs pgs" style="left:1194px">200</div>
</div>
<div id="dcard" class="abs"></div>
<div id="det">
<div class="abs" style="left:317px;top:639px;font-size:10.2px;color:#7d7d7d;white-space:nowrap;line-height:12px"><span style="color:#3a9fd0">Home</span> / Navigation / CheckExpenses app / Test case</div>
<svg class="abs" style="left:322px;top:671px" width="16" height="16" viewBox="0 0 16 16"><circle cx="8" cy="8" r="7.2" fill="none" stroke="#666" stroke-width="1"/><path d="M8 4 V9.5" stroke="#555" stroke-width="1.2"/><circle cx="8" cy="11.7" r="0.75" fill="#555"/></svg>
<div class="abs dtt" style="left:343px;font-size:11.5px">Details</div>
<svg class="abs" style="left:409px;top:672px" width="16" height="14" viewBox="0 0 16 14"><path d="M1.5 10.5 Q2.5 8 6 8.5 Q9 9 8.5 11 Q7.5 12.8 4 12.3 Q1 11.8 1.5 10.5 Z M6.5 5.5 Q7.5 2.5 11 2.2 Q14.5 2 14 4.2 Q13.5 6.3 10 6.8 M2.5 8 L4 6.5 M5 7 L6.3 5.7" fill="none" stroke="#707070" stroke-width="1"/></svg>
<div class="abs dtt" style="left:430px;font-size:11px">Test Steps</div>
<div class="abs" style="left:507px;top:661px;width:97px;height:36px;background:#deebf5;border-radius:3px"></div>
<svg class="abs" style="left:512px;top:672px" width="16" height="16" viewBox="0 0 16 16"><circle cx="2.4" cy="8" r="1.5" fill="none" stroke="#444" stroke-width="1.1"/><path d="M3.9 8 H12.1 M13.7 2.4 H9.5 Q7.5 2.4 7.5 4.4 V11.6 Q7.5 13.6 9.5 13.6 H12.1" fill="none" stroke="#444" stroke-width="1.1"/><circle cx="13.6" cy="2.4" r="1.5" fill="none" stroke="#444" stroke-width="1.1"/><circle cx="13.6" cy="8" r="1.5" fill="none" stroke="#444" stroke-width="1.1"/><circle cx="13.6" cy="13.6" r="1.5" fill="none" stroke="#444" stroke-width="1.1"/></svg>
<div class="abs dtt" style="left:533px;font-size:11.7px">Dependency</div>
<svg class="abs" style="left:629px;top:672px" width="16" height="16" viewBox="0 0 16 16"><circle cx="8" cy="8" r="7" fill="none" stroke="#555" stroke-width="1.1"/><path d="M6.8 4.5 V8.2 L9.5 10" fill="none" stroke="#555" stroke-width="1.1"/></svg>
<div class="abs dtt" style="left:650px;font-size:12px">History</div>
<div class="abs" style="left:1150px;top:665px;width:74px;height:28px;background:#3a9fd0;border-radius:4px;color:#fff;font-size:14px;line-height:28px;text-align:center">Open</div>
<div class="abs" style="left:317px;top:707px;width:907px;height:1px;background:#e3e5e8"></div>
<div class="abs" style="left:322px;top:725px;font-size:11px;color:#888;line-height:14px;white-space:nowrap">Tree view</div>
<svg class="abs" style="left:396px;top:723px" width="16" height="16" viewBox="0 0 16 16"><circle cx="2.4" cy="8" r="1.5" fill="none" stroke="#444" stroke-width="1.1"/><path d="M3.9 8 H12.1 M13.7 2.4 H9.5 Q7.5 2.4 7.5 4.4 V11.6 Q7.5 13.6 9.5 13.6 H12.1" fill="none" stroke="#444" stroke-width="1.1"/><circle cx="13.6" cy="2.4" r="1.5" fill="none" stroke="#444" stroke-width="1.1"/><circle cx="13.6" cy="8" r="1.5" fill="none" stroke="#444" stroke-width="1.1"/><circle cx="13.6" cy="13.6" r="1.5" fill="none" stroke="#444" stroke-width="1.1"/></svg>
<div class="abs" style="left:437px;top:718px;width:26px;height:26px;background:#deebf5;border-radius:3px"></div>
<svg class="abs" style="left:442px;top:723px" width="16" height="16" viewBox="0 0 16 16"><rect x="1.5" y="3" width="13" height="4.5" rx="2.2" fill="none" stroke="#444" stroke-width="1.1"/><rect x="1.5" y="9.5" width="13" height="4.5" rx="2.2" fill="none" stroke="#444" stroke-width="1.1"/></svg>
<div class="abs dth" style="left:327px">Dependency type</div>
<div class="abs dth" style="left:481px">Unlink</div>
<div class="abs dth" style="left:526px">Id</div>
<div class="abs dth" style="left:600px">Assigned to</div>
<div class="abs dth" style="left:750px">Name</div>
<div class="abs dth" style="left:1041px">Last execution status</div>
<div class="abs" style="left:1184px;top:759px;width:35px;overflow:hidden;font-size:12px;color:#888;line-height:14px;white-space:nowrap">Last execution</div>
<div class="abs" style="left:322px;top:780px;width:897px;height:2px;background:#dedfe1"></div>
<svg class="abs" style="left:328px;top:793px" width="5" height="8" viewBox="0 0 5 8"><path d="M0.5 0.5 L4.5 4 L0.5 7.5 Z" fill="#8a8a8a"/></svg>
<div class="abs dtd" style="left:349px;top:789.5px">is related to</div>
<svg class="abs" style="left:451px;top:790px" width="14" height="14" viewBox="0 0 14 14"><rect width="14" height="14" rx="2" fill="#4a7fae"/><circle cx="4.3" cy="3.8" r="1.3" fill="none" stroke="#fff" stroke-width="1"/><path d="M4.3 5.1 V11.3 M7.3 4 H8.6 Q9.6 4 9.6 5 V8.3" fill="none" stroke="#fff" stroke-width="1"/><circle cx="9.6" cy="9.6" r="1.4" fill="none" stroke="#fff" stroke-width="1"/><circle cx="9.6" cy="9.6" r="0.5" fill="#fff"/></svg>
<svg class="abs" style="left:480px;top:789px" width="16" height="16" viewBox="0 0 16 16"><path d="M7.9 4.5 L5.1 1.7 A2.4 2.4 0 0 0 1.7 5.1 L4.5 7.9 M8.1 11.5 L10.9 14.3 A2.4 2.4 0 0 0 14.3 10.9 L11.5 8.1" fill="none" stroke="#4a4a4a" stroke-width="1.5" stroke-linecap="round"/><path d="M10.5 0.3 V3.3 M12.3 3 L14 1.3 M12.7 4.8 H15.7 M0.3 7.5 H3.3 M1.5 11.5 L3.2 9.8 M5 11 V14" stroke="#8f8f8f" stroke-width="0.9"/></svg>
<div class="abs dtd" style="left:525px;top:790.0px;text-decoration:underline;color:#111;font-size:12.2px">TS1119474</div>
<div class="abs dtd" style="left:750px;top:790.5px;color:#1f80bb;font-size:12px">Sprint 13. Regression</div>
<svg class="abs" style="left:1040px;top:789px" width="16" height="16" viewBox="0 0 16 16"><circle cx="8" cy="8" r="8" fill="#6e6e70"/><path d="M3 13 Q5 9 9 8 Q12 7.5 15 9 Q14 14 8 16 Q5 15.5 3 13 Z" fill="#eeb24a"/></svg>
<div class="abs dtd" style="left:1060px;top:791.5px">Not complete</div>
<div class="abs dtd" style="left:1184px;top:790.0px;width:35px;overflow:hidden">13/09/2023</div>
<svg class="abs" style="left:328px;top:823px" width="5" height="8" viewBox="0 0 5 8"><path d="M0.5 0.5 L4.5 4 L0.5 7.5 Z" fill="#8a8a8a"/></svg>
<div class="abs dtd" style="left:349px;top:819.5px">is related to</div>
<svg class="abs" style="left:451px;top:820px" width="14" height="14" viewBox="0 0 14 14"><rect width="14" height="14" rx="3" fill="#6bbd8c"/><path d="M3.4 10.4 L10.2 4.4" stroke="#fbfffc" stroke-width="3.6" stroke-linecap="round"/><path d="M7.4 5.8 L8.9 7.3" stroke="#9bd3b0" stroke-width="0.6"/></svg>
<svg class="abs" style="left:480px;top:819px" width="16" height="16" viewBox="0 0 16 16"><path d="M7.9 4.5 L5.1 1.7 A2.4 2.4 0 0 0 1.7 5.1 L4.5 7.9 M8.1 11.5 L10.9 14.3 A2.4 2.4 0 0 0 14.3 10.9 L11.5 8.1" fill="none" stroke="#4a4a4a" stroke-width="1.5" stroke-linecap="round"/><path d="M10.5 0.3 V3.3 M12.3 3 L14 1.3 M12.7 4.8 H15.7 M0.3 7.5 H3.3 M1.5 11.5 L3.2 9.8 M5 11 V14" stroke="#8f8f8f" stroke-width="0.9"/></svg>
<div class="abs dtd" style="left:525px;top:820.0px;text-decoration:underline;color:#111;font-size:12.2px">RQ1119561</div>
<div class="abs dtd" style="left:750px;top:820.5px;color:#1f80bb;font-size:12px">As a user, I want to be able to log in into my account</div>
<svg class="abs" style="left:328px;top:853px" width="5" height="8" viewBox="0 0 5 8"><path d="M0.5 0.5 L4.5 4 L0.5 7.5 Z" fill="#8a8a8a"/></svg>
<div class="abs dtd" style="left:349px;top:849.5px">was copied to</div>
<svg class="abs" style="left:451px;top:850px" width="14" height="14" viewBox="0 0 14 14"><rect width="14" height="14" rx="2" fill="#e0a743"/><rect x="3" y="2.8" width="8" height="9" fill="#fdf7e6"/><path d="M5 3.5 H9" stroke="#f0c070" stroke-width="1"/></svg>
<svg class="abs" style="left:480px;top:849px" width="16" height="16" viewBox="0 0 16 16"><path d="M7.9 4.5 L5.1 1.7 A2.4 2.4 0 0 0 1.7 5.1 L4.5 7.9 M8.1 11.5 L10.9 14.3 A2.4 2.4 0 0 0 14.3 10.9 L11.5 8.1" fill="none" stroke="#4a4a4a" stroke-width="1.5" stroke-linecap="round"/><path d="M10.5 0.3 V3.3 M12.3 3 L14 1.3 M12.7 4.8 H15.7 M0.3 7.5 H3.3 M1.5 11.5 L3.2 9.8 M5 11 V14" stroke="#8f8f8f" stroke-width="0.9"/></svg>
<div class="abs dtd" style="left:525px;top:850.0px;text-decoration:underline;color:#111;font-size:12.2px">TC1123714</div>
<div class="abs dtd" style="left:599px;top:851.0px">Alice Williams</div>
<div class="abs dtd" style="left:750px;top:850.5px;color:#1f80bb;font-size:12px">Login to the app with invalid credentials</div>
<svg class="abs" style="left:1040px;top:850px" width="16" height="16" viewBox="0 0 16 16"><path d="M1.5 1.5 L14.5 14.5 M14.5 1.5 L1.5 14.5" stroke="#6e6e70" stroke-width="2.2"/></svg>
<div class="abs dtd" style="left:1060px;top:852.0px">Not run</div>
<svg class="abs" style="left:328px;top:883px" width="5" height="8" viewBox="0 0 5 8"><path d="M0.5 0.5 L4.5 4 L0.5 7.5 Z" fill="#8a8a8a"/></svg>
<div class="abs dtd" style="left:349px;top:879.5px">is related to</div>
<svg class="abs" style="left:450px;top:880px" width="15" height="15" viewBox="0 0 15 15"><path d="M7.5 0.3 L14.7 7.5 L7.5 14.7 L0.3 7.5 Z" fill="#2f80cc"/><path d="M7.5 5.6 L9.4 7.5 L7.5 9.4 L5.6 7.5 Z" fill="#fff"/></svg>
<svg class="abs" style="left:480px;top:879px" width="16" height="16" viewBox="0 0 16 16"><path d="M7.9 4.5 L5.1 1.7 A2.4 2.4 0 0 0 1.7 5.1 L4.5 7.9 M8.1 11.5 L10.9 14.3 A2.4 2.4 0 0 0 14.3 10.9 L11.5 8.1" fill="none" stroke="#4a4a4a" stroke-width="1.5" stroke-linecap="round"/><path d="M10.5 0.3 V3.3 M12.3 3 L14 1.3 M12.7 4.8 H15.7 M0.3 7.5 H3.3 M1.5 11.5 L3.2 9.8 M5 11 V14" stroke="#8f8f8f" stroke-width="0.9"/></svg>
<div class="abs dtd" style="left:525px;top:880.0px;text-decoration:underline;color:#111;font-size:12.2px">DOLKA-41</div>
<div class="abs dtd" style="left:750px;top:880.5px;color:#1f80bb;font-size:12px">DOLKA-41</div>
<svg class="abs" style="left:529px;top:809px" width="10" height="15" viewBox="0 0 10 15"><path d="M1 1 V12 L3.8 9.5 L5.8 14 L7.5 13.2 L5.6 8.8 L9 8.5 Z" fill="#111" stroke="#fff" stroke-width="0.8"/></svg>
</div>
<div id="status" class="abs">
 <div class="abs" style="left:7px;top:5px;font-size:13px;color:#2b2b2b;white-space:pre">Path:  CheckExpenses app</div>
 <div class="abs" style="left:1130px;top:2px;width:45px;height:20px;background:#e3e3e3;border-radius:10px"></div>
 <svg class="abs" style="left:1131px;top:4px" width="17" height="17" viewBox="0 0 17 17"><circle cx="8.5" cy="8.5" r="2.5" fill="none" stroke="#888" stroke-width="1.1"/><path d="M7.3 1.5 H9.7 L10.1 3.3 L11.6 4.1 L13.3 3.4 L14.6 5.5 L13.2 6.8 V8.5 V10.2 L14.6 11.5 L13.3 13.6 L11.6 12.9 L10.1 13.7 L9.7 15.5 H7.3 L6.9 13.7 L5.4 12.9 L3.7 13.6 L2.4 11.5 L3.8 10.2 V6.8 L2.4 5.5 L3.7 3.4 L5.4 4.1 L6.9 3.3 Z" fill="none" stroke="#888" stroke-width="1.1" stroke-linejoin="round"/></svg>
 <div class="abs" style="left:1184px;top:5px;font-size:11.3px;color:#8a8a8a;line-height:14px;white-space:nowrap">v. 23.44.0.0</div>
</div>
<div id="edge" class="abs"></div>
<div class="abs" style="left:1249px;top:0;width:1px;height:40px;background:#7f8ea6"></div>
<svg class="abs" style="left:1238px;top:914px" width="12" height="16" viewBox="0 0 12 16"><path d="M12 3 V16 H5 Q11 14 12 3 Z" fill="#6b2fc4"/></svg>
</body></html>
